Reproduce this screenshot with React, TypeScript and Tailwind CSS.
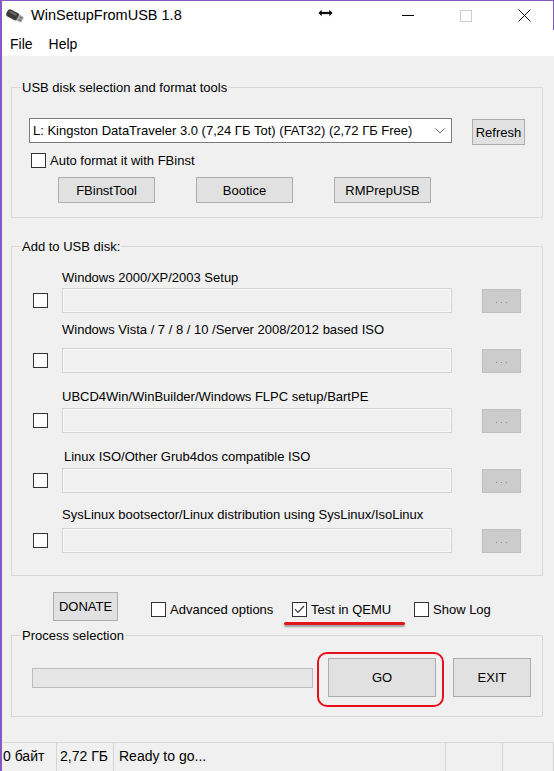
import React from "react";

const Check = ({ checked = false }: { checked?: boolean }) => (
  <span className="flex h-[15px] w-[15px] shrink-0 items-center justify-center border border-[#333333] bg-white">
    {checked && (
      <svg width="11" height="9" viewBox="0 0 11 9">
        <path d="M1 4.2 L4 7.4 L10 1" fill="none" stroke="#3a3a3a" strokeWidth="1.2" />
      </svg>
    )}
  </span>
);

const Btn = ({ children, className = "" }: { children?: React.ReactNode; className?: string }) => (
  <button
    type="button"
    className={`flex shrink-0 items-center justify-center border border-[#adadad] bg-[#e1e1e1] text-[13px] leading-none text-black ${className}`}
  >
    {children}
  </button>
);

const Group = ({ title, className = "", children }: { title: string; className?: string; children?: React.ReactNode }) => (
  <fieldset className={`w-[532px] border border-[#d9d9d9] ${className}`}>
    <legend className="ml-[9px] px-[1px] text-[13px] leading-[15px]">{title}</legend>
    {children}
  </fieldset>
);

const rows = [
  { label: "Windows 2000/XP/2003 Setup", top: "mt-[16px]", gap: "mt-[3px]", pl: "pl-[50px]" },
  { label: "Windows Vista / 7 / 8 / 10 /Server 2008/2012 based ISO", top: "mt-[9px]", gap: "mt-[11px]", pl: "pl-[50px]" },
  { label: "UBCD4Win/WinBuilder/Windows FLPC setup/BartPE", top: "mt-[16px]", gap: "mt-[4px]", pl: "pl-[50px]" },
  { label: "Linux ISO/Other Grub4dos compatible ISO", top: "mt-[16px]", gap: "mt-[4px]", pl: "pl-[52px]" },
  { label: "SysLinux bootsector/Linux distribution using SysLinux/IsoLinux", top: "mt-[14px]", gap: "mt-[6px]", pl: "pl-[50px]" },
];

const UsbIcon = () => (
  <svg width="20" height="18" viewBox="0 0 20 18">
    <g transform="rotate(28 10 9)">
      <rect x="1" y="5" width="13" height="8" rx="3" fill="#3b3b3b" />
      <rect x="3" y="6.5" width="8" height="2" rx="1" fill="#6a6a6a" />
      <rect x="13" y="5.8" width="5.5" height="6.4" rx="1" fill="#a8a8a8" />
      <rect x="14.5" y="7" width="3" height="1.3" fill="#6e6e6e" />
      <rect x="14.5" y="9.6" width="3" height="1.3" fill="#6e6e6e" />
    </g>
  </svg>
);

export default function App() {
  return (
    <div className="relative flex h-[771px] w-[554px] flex-col overflow-hidden border-l-2 border-[#8757c4] bg-[#f0f0f0] font-['Liberation_Sans',Arial,sans-serif] text-black">
      {/* title bar */}
      <div className="flex h-[30px] items-center border-t border-r border-[#8757c4] bg-white">
        <div className="ml-[3px]">
          <UsbIcon />
        </div>
        <span className="ml-[6px] text-[14.5px]">WinSetupFromUSB 1.8</span>
        <div className="ml-auto flex h-full">
          <div className="flex w-[58px] items-center justify-center">
            <span className="h-[1px] w-[12px] bg-black" />
          </div>
          <div className="flex w-[58px] items-center justify-center">
            <span className="h-[12px] w-[12px] border border-[#cccccc]" />
          </div>
          <div className="flex w-[58px] items-center justify-center">
            <svg width="13" height="13" viewBox="0 0 13 13">
              <path d="M0.5 0.5 L12.5 12.5 M12.5 0.5 L0.5 12.5" stroke="#111" strokeWidth="1" />
            </svg>
          </div>
        </div>
        {/* mouse cursor */}
        <svg className="absolute left-[315px] top-[8px]" width="17" height="10" viewBox="0 0 17 10">
          <path d="M1 5 L5 1 V3.5 H12 V1 L16 5 L12 9 V6.5 H5 V9 Z" fill="#111" stroke="#fff" strokeWidth="0.8" />
        </svg>
      </div>

      {/* menu */}
      <div className="flex h-[26px] items-center gap-[16px] bg-white pl-[8px] pt-[2px] text-[14px]">
        <span>File</span>
        <span>Help</span>
      </div>

      {/* body */}
      <div className="flex flex-1 flex-col pl-[9px]">
        <Group title="USB disk selection and format tools" className="mt-[24px]">
          <div className="pt-[23px] pb-[14px]">
            <div className="flex items-start pl-[17px]">
              <div className="flex h-[25px] w-[423px] items-center border border-[#7a7a7a] bg-white pl-[3px] pr-[6px] text-[13px]">
                <span className="flex-1 whitespace-nowrap">L: Kingston DataTraveler 3.0 (7,24 ГБ Tot) (FAT32) (2,72 ГБ Free)</span>
                <svg width="10" height="6" viewBox="0 0 10 6">
                  <path d="M0.5 0.5 L5 5 L9.5 0.5" fill="none" stroke="#6d6d6d" strokeWidth="1" />
                </svg>
              </div>
              <Btn className="ml-[20px] mt-[1px] h-[26px] w-[53px]">Refresh</Btn>
            </div>
            <div className="mt-[8px] flex items-center pl-[19px] text-[13px] leading-[15px]">
              <Check />
              <span className="ml-[4px]">Auto format it with FBinst</span>
            </div>
            <div className="mt-[9px] flex">
              <Btn className="ml-[46px] h-[26px] w-[97px]">FBinstTool</Btn>
              <Btn className="ml-[41px] h-[26px] w-[97px]">Bootice</Btn>
              <Btn className="ml-[41px] h-[26px] w-[97px]">RMPrepUSB</Btn>
            </div>
          </div>
        </Group>

        <Group title="Add to USB disk:" className="mt-[21px]">
          <div className="pb-[22px]">
            {rows.map((r) => (
              <div key={r.label}>
                <div className={`${r.top} ${r.pl} whitespace-nowrap text-[13px] leading-[15px]`}>{r.label}</div>
                <div className={`${r.gap} flex h-[25px] items-center`}>
                  <span className="ml-[21px]">
                    <Check />
                  </span>
                  <div className="ml-[14px] h-[25px] w-[390px] border border-[#d3d3d3] bg-[#f0f0f0] shadow-[inset_0_0_0_1px_#f8f8f8]" />
                  <div className="ml-[30px] flex h-[24px] w-[39px] items-end justify-center gap-[4px] border border-[#bfbfbf] bg-[#cccccc] pb-[9px]">
                    <span className="h-[1px] w-[1px] bg-[#8a8a8a]" />
                    <span className="h-[1px] w-[1px] bg-[#8a8a8a]" />
                    <span className="h-[1px] w-[1px] bg-[#8a8a8a]" />
                  </div>
                </div>
              </div>
            ))}
          </div>
        </Group>

        {/* options row */}
        <div className="mt-[16px] flex h-[29px] items-start text-[13px] leading-[15px]">
          <Btn className="ml-[42px] h-[29px] w-[65px]">DONATE</Btn>
          <div className="ml-[33px] mt-[10px] flex w-[141px] items-center">
            <Check />
            <span className="ml-[4px]">Advanced options</span>
          </div>
          <div className="relative mt-[10px] flex w-[122px] items-center">
            <Check checked />
            <span className="ml-[4px]">Test in QEMU</span>
            <span className="absolute left-[-8px] top-[20px] h-[3px] w-[121px] rounded-full bg-[#e3141b] shadow-[0_2px_2px_rgba(0,0,0,0.35)]" />
          </div>
          <div className="mt-[10px] flex items-center">
            <Check />
            <span className="ml-[4px]">Show Log</span>
          </div>
        </div>

        <Group title="Process selection" className="mt-[7px]">
          <div className="flex items-center pt-[15px] pb-[19px] pl-[20px]">
            <div className="h-[20px] w-[281px] border border-[#bcbcbc] bg-[#e6e6e6]" />
            <div className="relative ml-[15px]">
              <Btn className="h-[39px] w-[108px]">GO</Btn>
              <span className="absolute left-[-11px] top-[-6px] h-[55px] w-[127px] rounded-[10px] border-2 border-[#e8101a]" />
            </div>
            <Btn className="ml-[17px] h-[39px] w-[78px]">EXIT</Btn>
          </div>
        </Group>
      </div>

      {/* status bar */}
      <div className="flex h-[29px] border-t border-[#dadada] text-[14px] leading-[26px]">
        <div className="w-[55px] border-r border-[#d6d6d6] pl-[1px]">0 байт</div>
        <div className="w-[57px] border-r border-[#d6d6d6] pl-[3px]">2,72 ГБ</div>
        <div className="flex-1 border-r border-[#d6d6d6] pl-[5px]">Ready to go...</div>
        <div className="w-[57px] border-r border-[#d6d6d6]" />
        <div className="w-[51px] border-r border-[#d6d6d6]" />
      </div>
    </div>
  );
}
